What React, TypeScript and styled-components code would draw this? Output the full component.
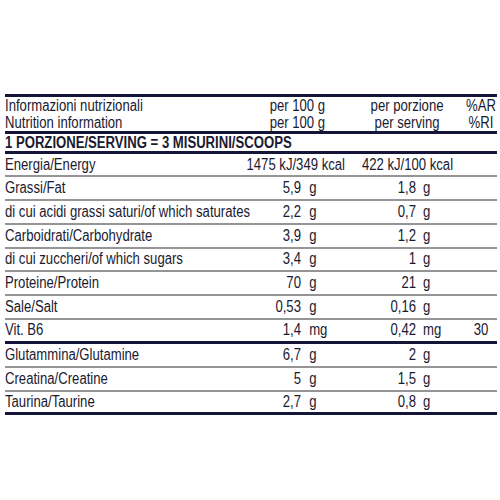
import React from "react";
import styled, { createGlobalStyle, css } from "styled-components";

const Global = createGlobalStyle`
  html, body { margin: 0; padding: 0; background: #ffffff; }
  body { width: 500px; height: 500px; overflow: hidden; }
`;

const NAVY = "#15153a";
const GRAY = "#959595";
const TEXT = "#1a1a30";
const SQUEEZE = 0.82;

const Page = styled.div`
  padding: 94px 0 0 5px;
  font-family: "Liberation Sans", Arial, sans-serif;
  font-size: 16px;
  color: ${TEXT};
`;

/* Table is laid out at full width, then condensed horizontally to mimic a narrow typeface */
const Table = styled.div`
  width: 600px;
  border-top: 3px solid ${NAVY};
  transform: scaleX(${SQUEEZE});
  transform-origin: 0 0;
`;

const COLS = "minmax(0, 1fr) 74.4px 53.7px 86.6px 59.8px 39px";

const Row = styled.div<{ $h: number; $heavy?: boolean }>`
  display: grid;
  grid-template-columns: ${COLS};
  align-items: center;
  box-sizing: border-box;
  height: ${(p) => p.$h}px;
  white-space: nowrap;
  border-bottom: ${(p) => (p.$heavy ? `3px solid ${NAVY}` : `2px solid ${GRAY}`)};
`;

const Label = styled.div<{ $bold?: boolean }>`
  grid-column: 1;
  ${(p) =>
    p.$bold &&
    css`
      font-weight: bold;
      grid-column: 1 / -1;
    `}
`;

const HeaderStack = styled.div<{ $col: string; $align?: string; $shift?: number }>`
  grid-column: ${(p) => p.$col};
  display: flex;
  flex-direction: column;
  line-height: 17px;
  padding-left: ${(p) => p.$shift || 0}px;
  text-align: ${(p) => p.$align || "center"};
`;

const Value = styled.div<{ $col: number }>`
  grid-column: ${(p) => p.$col};
  text-align: right;
`;

const Unit = styled.div<{ $col: number; $pad: number }>`
  grid-column: ${(p) => p.$col};
  padding-left: ${(p) => p.$pad}px;
`;

const Span = styled.div<{ $col: string; $right: number }>`
  grid-column: ${(p) => p.$col};
  justify-self: end;
  margin-right: ${(p) => p.$right}px;
`;

const AR = styled.div`
  grid-column: 6;
  text-align: center;
`;

type Item = {
  label: string;
  v1: string;
  u: string;
  v2: string;
  ar?: string;
  heavy?: boolean;
};

const items: Item[] = [
  { label: "Grassi/Fat", v1: "5,9", u: "g", v2: "1,8" },
  { label: "di cui acidi grassi saturi/of which saturates", v1: "2,2", u: "g", v2: "0,7" },
  { label: "Carboidrati/Carbohydrate", v1: "3,9", u: "g", v2: "1,2" },
  { label: "di cui zuccheri/of which sugars", v1: "3,4", u: "g", v2: "1" },
  { label: "Proteine/Protein", v1: "70", u: "g", v2: "21" },
  { label: "Sale/Salt", v1: "0,53", u: "g", v2: "0,16" },
  { label: "Vit. B6", v1: "1,4", u: "mg", v2: "0,42", ar: "30", heavy: true },
  { label: "Glutammina/Glutamine", v1: "6,7", u: "g", v2: "2" },
  { label: "Creatina/Creatine", v1: "5", u: "g", v2: "1,5" },
  { label: "Taurina/Taurine", v1: "2,7", u: "g", v2: "0,8", heavy: true },
];

export default function App() {
  return (
    <Page>
      <Global />
      <Table>
        <Row $h={37} $heavy>
          <HeaderStack $col="1" $align="left">
            <span>Informazioni nutrizionali</span>
            <span>Nutrition information</span>
          </HeaderStack>
          <HeaderStack $col="2 / 4" $shift={12}>
            <span>per 100 g</span>
            <span>per 100 g</span>
          </HeaderStack>
          <HeaderStack $col="4 / 6" $shift={5}>
            <span>per porzione</span>
            <span>per serving</span>
          </HeaderStack>
          <HeaderStack $col="6">
            <span>%AR</span>
            <span>%RI</span>
          </HeaderStack>
        </Row>
        <Row $h={20} $heavy>
          <Label $bold>1 PORZIONE/SERVING = 3 MISURINI/SCOOPS</Label>
        </Row>
        <Row $h={23}>
          <Label>Energia/Energy</Label>
          <Span $col="2 / 4" $right={0}>1475 kJ/349 kcal</Span>
          <Span $col="4 / 6" $right={14.6}>422 kJ/100 kcal</Span>
        </Row>
        {items.map((it) => (
          <Row key={it.label} $h={23.85} $heavy={it.heavy}>
            <Label>{it.label}</Label>
            <Value $col={2}>{it.v1}</Value>
            <Unit $col={3} $pad={10}>{it.u}</Unit>
            <Value $col={4}>{it.v2}</Value>
            <Unit $col={5} $pad={8.5}>{it.u}</Unit>
            {it.ar && <AR>{it.ar}</AR>}
          </Row>
        ))}
      </Table>
    </Page>
  );
}
